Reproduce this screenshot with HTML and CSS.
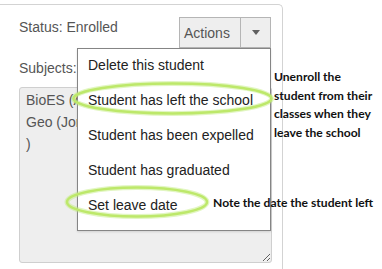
FILE: index.html
```html
<!DOCTYPE html>
<html lang="en">
<head>
  <meta charset="UTF-8">
  <title>Student actions</title>
  <link rel="stylesheet" href="styles.css">
</head>
<body>

  <div class="panel">
    <div class="top-row">
      <span class="status">Status: Enrolled</span>
      <div class="btn-group">
        <button class="btn btn-main">Actions</button>
        <button class="btn btn-caret"><span class="caret"></span></button>

        <ul class="menu">
          <li>Delete this student</li>
          <li>Student has left the school</li>
          <li>Student has been expelled</li>
          <li>Student has graduated</li>
          <li>Set leave date</li>
        </ul>
      </div>
    </div>

    <div class="label">Subjects:</div>
    <textarea class="subjects" readonly>BioES (Alexandra Smith),
Geo (Jonathan Brown
)</textarea>
  </div>

  <!-- callouts drawn over the screenshot -->
  <svg class="marks" width="382" height="269" viewBox="0 0 382 269">
    <ellipse class="glow" cx="172.5" cy="98.5" rx="99" ry="15"/>
    <ellipse class="ring" cx="172.5" cy="98.5" rx="99" ry="15"/>
    <ellipse class="glow" cx="137" cy="202" rx="70" ry="14.5"/>
    <ellipse class="ring" cx="137" cy="202" rx="70" ry="14.5"/>
  </svg>

  <p class="note note-left">Unenroll the<br>student from their<br>classes when they<br>leave the school</p>
  <p class="note note-date">Note the date the student left</p>

</body>
</html>
```

FILE: styles.css
```css
html, body {
  overflow: hidden;
}

body {
  font-family: 'Liberation Sans', Arial, sans-serif;
  font-size: 14px;
  color: #555;
  background: #fff;
  margin: 0;
  padding: 0;
  position: relative;
  width: 382px;
  height: 269px;
}

/* card is cut off by the left and bottom edge of the shot */
.panel {
  box-sizing: border-box;
  width: 289px;
  margin: 4px 0 0 -6px;
  padding: 12px 11px 6px 24px;
  border: 1px solid #d3d3d3;
  border-bottom: none;
  border-radius: 5px 5px 0 0;
  background: #fff;
}

.top-row {
  display: flex;
  justify-content: space-between;
  align-items: flex-start;
}

.status {
  line-height: 20px;
}

.btn-group {
  position: relative;
  display: flex;
}

.btn {
  box-sizing: border-box;
  height: 31px;
  margin: 0;
  padding: 0;
  font-family: inherit;
  font-size: 14px;
  color: #555;
  background-color: #eee;
  border: 1px solid #b5b5b5;
  border-radius: 0;
}

.btn-main {
  width: 62px;
  padding-left: 4px;
  text-align: left;
}

.btn-caret {
  width: 31px;
  margin-left: -1px;
  display: flex;
  align-items: center;
  justify-content: center;
}

.caret {
  width: 0;
  height: 0;
  border-left: 4.5px solid transparent;
  border-right: 4.5px solid transparent;
  border-top: 5px solid #606060;
}

.menu {
  position: absolute;
  top: 31px;
  right: 0;
  box-sizing: border-box;
  width: 194px;
  margin: 0;
  padding: 0 0 6px 0;
  list-style: none;
  background: #fff;
  border: 1px solid #858585;
  box-shadow: 0 1px 2px rgba(0,0,0,0.12);
  z-index: 2;
}

.menu li {
  height: 35px;
  box-sizing: border-box;
  padding: 6px 0 0 10px;
  line-height: 20px;
  color: #222;
  white-space: nowrap;
}

.label {
  margin-top: 10px;
  line-height: 20px;
}

.subjects {
  display: block;
  box-sizing: border-box;
  width: 253px;
  height: 176px;
  margin-top: 9px;
  padding: 1px 6px;
  font-family: inherit;
  font-size: 14px;
  line-height: 22px;
  color: #555;
  background: #eee;
  border: 1px solid #cfcfcf;
  border-radius: 3px;
  outline: none;
}

.marks {
  position: absolute;
  top: 0;
  left: 0;
  pointer-events: none;
  z-index: 3;
}

.marks ellipse {
  fill: none;
}

.glow {
  stroke: rgba(190, 235, 120, 0.45);
  stroke-width: 5;
}

.ring {
  stroke: #bde86a;
  stroke-width: 2.5;
}

.note {
  position: absolute;
  margin: 0;
  font-family: Lato, 'Open Sans', sans-serif;
  font-weight: bold;
  font-size: 12.1px;
  line-height: 18.5px;
  color: #111;
  white-space: nowrap;
  z-index: 4;
}

.note-left {
  left: 274px;
  top: 68px;
}

.note-date {
  left: 213px;
  top: 194px;
}
```
